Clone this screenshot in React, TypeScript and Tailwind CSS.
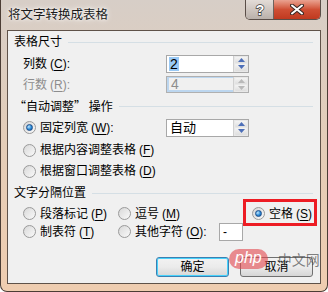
import React from "react";

const font = { fontFamily: '"Liberation Sans", "Noto Sans CJK SC", sans-serif' };

// mnemonic key like (C) with the letter underlined
const Key: React.FC<{ k: string }> = ({ k }) => (
  <span className="ml-[3px]">
    (<span className="underline underline-offset-[2px]">{k}</span>)
  </span>
);

const Radio: React.FC<{ checked?: boolean }> = ({ checked }) => (
  <span className="flex h-[13px] w-[13px] shrink-0 items-center justify-center rounded-full border border-[#9a9a9a] bg-gradient-to-br from-[#d6d6d6] to-[#fafafa]">
    {checked ? (
      <span className="h-[7px] w-[7px] rounded-full border border-[#1d4f8c] bg-[radial-gradient(circle_at_35%_35%,#bfe6ff,#2a8ad6_55%,#0f4f9a)]" />
    ) : (
      <span className="h-[9px] w-[9px] rounded-full bg-gradient-to-br from-[#dcdcdc] to-[#f6f6f6]" />
    )}
  </span>
);

const SpinArrows: React.FC<{ disabled?: boolean }> = ({ disabled }) => {
  const c = disabled ? "#b9b9b9" : "#4d6fb8";
  return (
    <div className="flex w-[15px] flex-col gap-[1px] border-l border-[#d0d0d0] bg-[#e8e8e8] p-[1px]">
      <div className="flex flex-1 items-center justify-center rounded-[1px] bg-gradient-to-b from-[#f4f4f4] to-[#dedede]">
        <svg width="7" height="4" viewBox="0 0 7 4">
          <path d="M0 4 L3.5 0 L7 4 Z" fill={c} />
        </svg>
      </div>
      <div className="flex flex-1 items-center justify-center rounded-[1px] bg-gradient-to-b from-[#f4f4f4] to-[#dedede]">
        <svg width="7" height="4" viewBox="0 0 7 4">
          <path d="M0 0 L7 0 L3.5 4 Z" fill={c} />
        </svg>
      </div>
    </div>
  );
};

const GroupHeader: React.FC<{ label: React.ReactNode; h: string }> = ({ label, h }) => (
  <div className={`flex items-center pl-[6px] pr-[7px] ${h}`}>
    <span className="text-[12px] text-black">{label}</span>
    <div className="ml-[6px] h-px flex-1 bg-[#d5dfe5]" />
  </div>
);

export default function App() {
  return (
    <div
      className="relative h-[292px] w-[328px] overflow-hidden bg-white text-[12px] leading-none"
      style={font}
    >
      <div className="flex h-[292px] w-[328px] flex-col rounded-b-[7px] border-b border-l border-r border-[#4b3d35] bg-gradient-to-b from-[#d7cec7] via-[#e4cdb8] to-[#efcdb0]">
        {/* title bar */}
        <div className="flex h-[30px] shrink-0 items-start">
          <span className="mt-[9px] ml-[7px] text-[12.5px] text-[#1b1b1b] [text-shadow:0_0_6px_#fff,0_0_3px_#fff]">
            将文字转换成表格
          </span>
          <div className="ml-auto mr-[6px] flex h-[20px] overflow-hidden rounded-b-[5px] border-b border-l border-r border-[#5a4e48]">
            <div className="flex w-[28px] items-center justify-center border-r border-[#6e625c] bg-gradient-to-b from-[#e3dcd7] via-[#cfc6c0] to-[#b9b0aa]">
              <svg width="12" height="14" viewBox="0 0 12 14">
                <text
                  x="6"
                  y="12"
                  textAnchor="middle"
                  fontSize="14"
                  fontWeight="bold"
                  fontFamily="Liberation Sans"
                  fill="#fff"
                  stroke="#3a3a3a"
                  strokeWidth="1.4"
                  paintOrder="stroke"
                >
                  ?
                </text>
              </svg>
            </div>
            <div className="flex w-[46px] items-center justify-center bg-gradient-to-b from-[#e9a290] via-[#cf4f34] to-[#c0391f]">
              <svg width="14" height="11" viewBox="0 0 14 11">
                <path
                  d="M2 1.5 L12 9.5 M12 1.5 L2 9.5"
                  stroke="#3a2824"
                  strokeWidth="4"
                  strokeLinecap="round"
                />
                <path
                  d="M2 1.5 L12 9.5 M12 1.5 L2 9.5"
                  stroke="#fff"
                  strokeWidth="2"
                  strokeLinecap="round"
                />
              </svg>
            </div>
          </div>
        </div>

        {/* client area */}
        <div className="mx-[6px] flex h-[254px] flex-col border border-[#5f5249] bg-[#f0f0f0]">
          <GroupHeader label="表格尺寸" h="h-[22px]" />

          <div className="flex h-[21px] items-center pl-[15px]">
            <span className="w-[143px] text-black">
              列数<Key k="C" />:
            </span>
            <div className="flex h-[18px] w-[83px] border border-[#a8a8a8] bg-white">
              <div className="flex flex-1 items-center pl-[2px]">
                <span className="bg-[#99c9f5] px-px text-[14px] leading-[14px] text-black">2</span>
              </div>
              <SpinArrows />
            </div>
          </div>

          <div className="flex h-[21px] items-center pl-[15px]">
            <span className="w-[143px] text-[#8d8d8d]">
              行数<Key k="R" />:
            </span>
            <div className="flex h-[17px] w-[83px] border border-[#b0b0b0] bg-[#f0f0f0]">
              <div className="flex flex-1 items-center border-b-2 border-l-2 border-t border-[#bcd6ef] pl-[2px]">
                <span className="text-[14px] leading-[14px] text-[#8d8d8d]">4</span>
              </div>
              <SpinArrows disabled />
            </div>
          </div>

          <GroupHeader
            label={
              <span style={{ fontFamily: '"Noto Sans CJK SC", sans-serif' }}>
                “自动调整” 操作
              </span>
            }
            h="h-[23px]"
          />

          <div className="flex h-[19px] items-center pl-[15px]">
            <div className="flex w-[143px] items-center gap-[4px]">
              <Radio checked />
              <span className="text-black">
                固定列宽<Key k="W" />:
              </span>
            </div>
            <div className="flex h-[18px] w-[83px] border border-[#a8a8a8] bg-white">
              <div className="flex flex-1 items-center pl-[3px] text-[13px] text-black">自动</div>
              <SpinArrows />
            </div>
          </div>

          <div className="flex h-[24px] items-center gap-[4px] pl-[15px] pt-[2px]">
            <Radio />
            <span className="text-black">
              根据内容调整表格<Key k="F" />
            </span>
          </div>

          <div className="flex h-[20px] items-center gap-[4px] pl-[15px]">
            <Radio />
            <span className="text-black">
              根据窗口调整表格<Key k="D" />
            </span>
          </div>

          <GroupHeader label="文字分隔位置" h="h-[24px]" />

          <div className="flex h-[17px] items-center pl-[15px]">
            <div className="flex w-[95px] items-center gap-[4px]">
              <Radio />
              <span className="text-black">
                段落标记<Key k="P" />
              </span>
            </div>
            <div className="flex w-[134px] items-center gap-[4px]">
              <Radio />
              <span className="text-black">
                逗号<Key k="M" />
              </span>
            </div>
            <div className="flex items-center gap-[4px]">
              <Radio checked />
              <span className="text-black">
                空格<Key k="S" />
              </span>
            </div>
          </div>

          <div className="flex h-[19px] items-center pl-[15px]">
            <div className="flex w-[95px] items-center gap-[4px]">
              <Radio />
              <span className="text-black">
                制表符<Key k="T" />
              </span>
            </div>
            <div className="flex items-center gap-[4px]">
              <Radio />
              <span className="w-[84px] text-black">
                其他字符<Key k="O" />:
              </span>
            </div>
            <div className="flex h-[18px] w-[24px] items-center border border-[#a8a8a8] bg-white pl-[3px] text-black">
              -
            </div>
          </div>

          <div className="mt-[16px] flex justify-end gap-[11px] pr-[7px]">
            <button className="h-[20px] w-[73px] rounded-[3px] border border-[#3c7fb1] bg-gradient-to-b from-[#f2f2f2] via-[#ebebeb] to-[#d6d6d6] text-[12px] text-black shadow-[inset_0_0_0_1px_#48d2fb]">
              确定
            </button>
            <button className="h-[20px] w-[73px] rounded-[3px] border border-[#707070] bg-gradient-to-b from-[#f2f2f2] via-[#ebebeb] to-[#d6d6d6] text-[12px] text-black">
              取消
            </button>
          </div>
        </div>
      </div>

      {/* red annotation box */}
      <div className="pointer-events-none absolute left-[243px] top-[199px] h-[27px] w-[74px] border-[3px] border-[#ed1c24]" />

      {/* watermark */}
      <div className="pointer-events-none absolute left-[229px] top-[249px] flex items-center gap-[10px]">
        <span className="rounded-full bg-[#e2464c]/60 px-[6px] pb-[3px] pt-[1px] text-[16px] italic leading-none text-white">
          php
        </span>
        <span className="text-[14px] text-[#333]/60" style={{ fontFamily: '"Noto Sans CJK SC", sans-serif' }}>
          中文网
        </span>
      </div>
    </div>
  );
}
